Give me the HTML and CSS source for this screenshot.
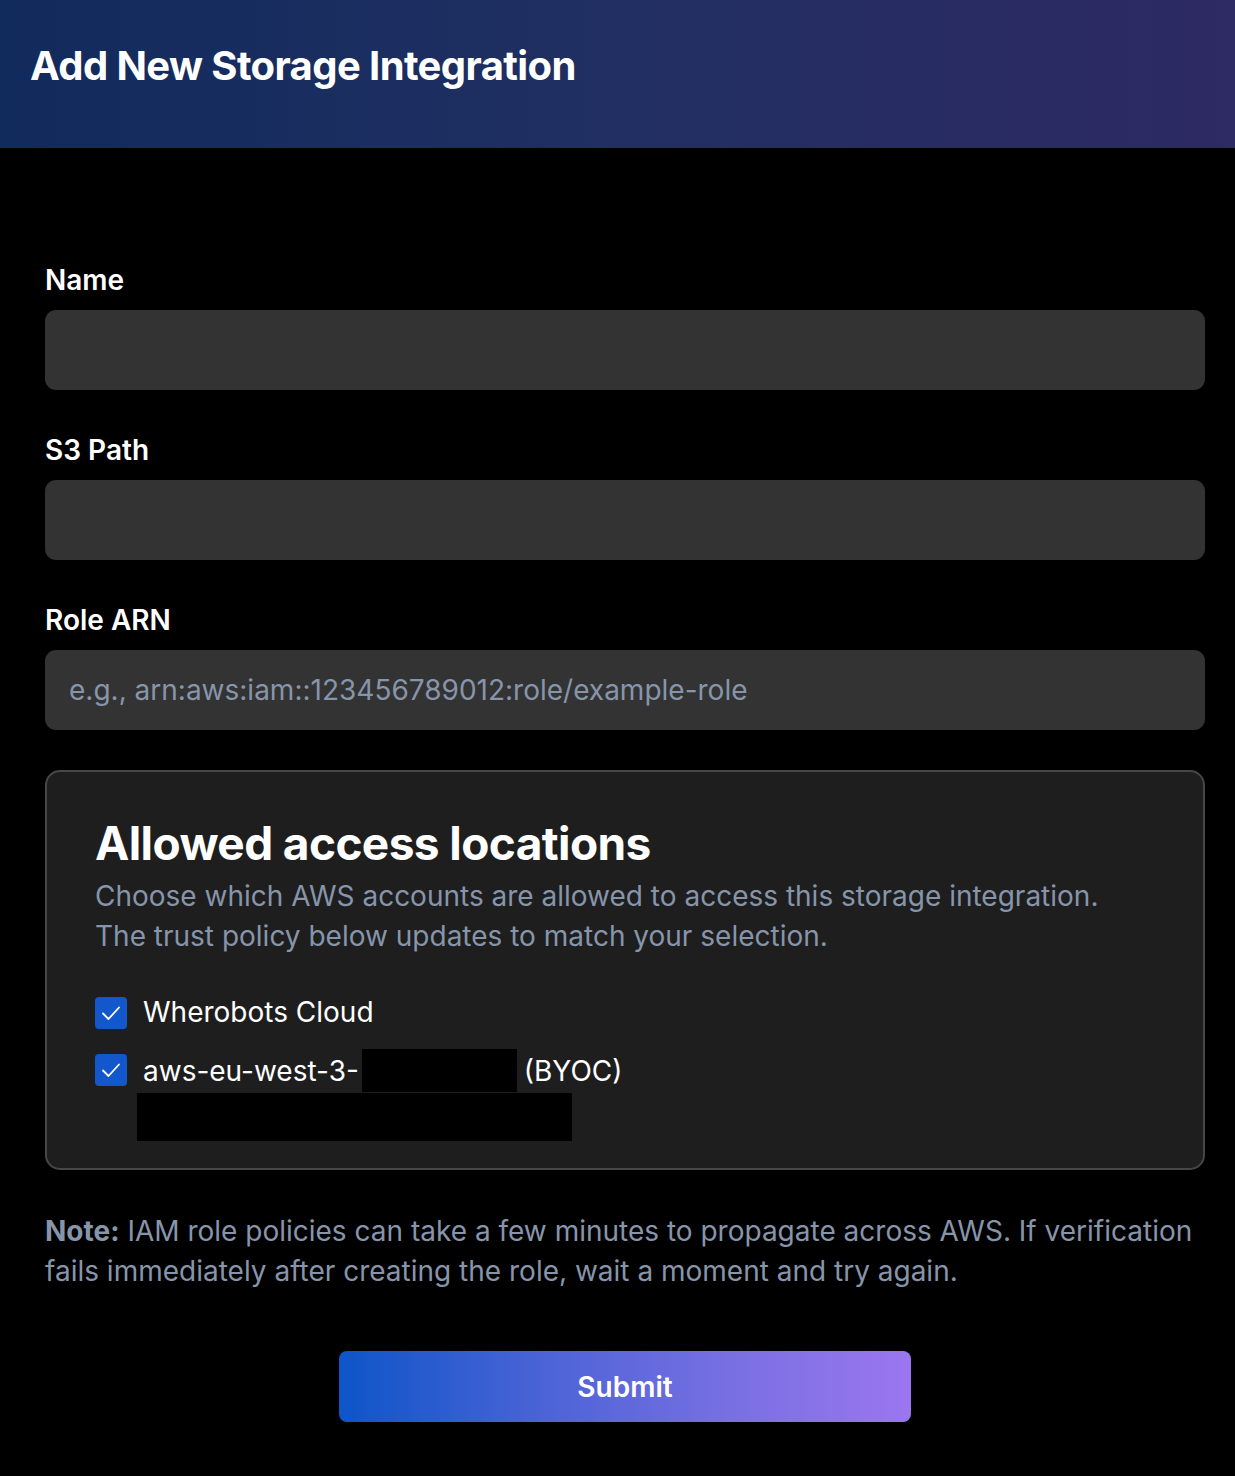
FILE: index.html
```html
<!DOCTYPE html>
<html lang="en">
<head>
<meta charset="utf-8">
<title>Add New Storage Integration</title>
<link rel="stylesheet" href="styles.css">
</head>
<body>
<header class="header">
  <h1 class="title">Add New Storage Integration</h1>
</header>
<main class="form">
  <div class="field">
    <label class="label">Name</label>
    <div class="input"></div>
  </div>
  <div class="field">
    <label class="label">S3 Path</label>
    <div class="input"></div>
  </div>
  <div class="field">
    <label class="label">Role ARN</label>
    <div class="input"><span class="placeholder">e.g., arn:aws:iam::123456789012:role/example-role</span></div>
  </div>
  <section class="box">
    <h2 class="box-title">Allowed access locations</h2>
    <p class="box-desc">Choose which AWS accounts are allowed to access this storage integration. The trust policy below updates to match your selection.</p>
    <div class="options">
      <div class="option">
        <span class="check"><svg viewBox="0 0 32 32" width="32" height="32"><path d="M8 16.5l5.5 5.5L24 10.5" fill="none" stroke="#fff" stroke-width="1.8" stroke-linecap="round" stroke-linejoin="round"/></svg></span>
        <span class="opt-label">Wherobots Cloud</span>
      </div>
      <div class="option">
        <span class="check"><svg viewBox="0 0 32 32" width="32" height="32"><path d="M8 16.5l5.5 5.5L24 10.5" fill="none" stroke="#fff" stroke-width="1.8" stroke-linecap="round" stroke-linejoin="round"/></svg></span>
        <span class="opt-label">
          <span class="opt-line">aws-eu-west-3-<span class="redact redact-a"></span>(BYOC)</span>
          <span class="redact redact-b"></span>
        </span>
      </div>
    </div>
  </section>
  <p class="note"><strong class="note-lead">Note:</strong> IAM role policies can take a few minutes to propagate across AWS. If verification fails immediately after creating the role, wait a moment and try again.</p>
  <div class="actions">
    <button class="submit" type="button">Submit</button>
  </div>
</main>
</body>
</html>
```
FILE: styles.css
```css
* { box-sizing: border-box; }
html, body {
  margin: 0;
  background: #000;
  color: #fff;
  font-family: Inter, "Noto Sans", "Liberation Sans", sans-serif;
}
.header {
  height: 148px;
  padding: 0 30px;
  display: flex;
  align-items: center;
  background: linear-gradient(90deg, #112b5c 0%, #212f62 50%, #2e2a63 100%);
}
.title {
  margin: 0;
  font-size: 40px;
  font-weight: 700;
  letter-spacing: -0.6px;
  line-height: 1;
  transform: translateY(-8px);
}
.form {
  padding: 112px 30px 60px 45px;
}
.field {
  display: flex;
  flex-direction: column;
  gap: 10px;
  margin-bottom: 40px;
}
.label {
  font-size: 28px;
  font-weight: 600;
  line-height: 40px;
}
.input {
  height: 80px;
  background: #333333;
  border-radius: 11px;
  display: flex;
  align-items: center;
  padding: 0 24px;
}
.placeholder {
  font-size: 28px;
  color: #8795ab;
}
.box {
  border: 2px solid #474747;
  background: #1e1e1e;
  border-radius: 15px;
  padding: 44px 48px 27px 48px;
}
.box-title {
  margin: 0;
  font-size: 46px;
  font-weight: 700;
  line-height: 54px;
  letter-spacing: -0.6px;
}
.box-desc {
  margin: 6px 0 0;
  font-size: 28px;
  line-height: 40px;
  color: #8795ab;
  max-width: 1010px;
}
.options {
  margin-top: 36px;
  display: flex;
  flex-direction: column;
  gap: 17px;
}
.option {
  display: flex;
  align-items: flex-start;
  gap: 16px;
}
.check {
  flex: none;
  width: 32px;
  height: 32px;
  margin-top: 5px;
  border-radius: 4px;
  background: #1258cc;
  display: flex;
}
.opt-label {
  font-size: 28px;
  line-height: 40px;
  display: flex;
  flex-direction: column;
}
.opt-line {
  display: flex;
  align-items: center;
}
.redact {
  display: inline-block;
  background: #000;
}
.redact-a {
  width: 155px;
  height: 43px;
  margin-left: 3px;
  margin-right: 7px;
}
.redact-b {
  width: 435px;
  height: 48px;
  margin-left: -6px;
  margin-top: 1px;
}
.note {
  margin: 41px 0 0;
  font-size: 28px;
  line-height: 40px;
  color: #8795ab;
}
.note-lead { font-weight: 700; }
.actions {
  margin-top: 60px;
  display: flex;
  justify-content: center;
}
.submit {
  width: 572px;
  height: 71px;
  border: 0;
  border-radius: 8px;
  background: linear-gradient(90deg, #0d55c8 0%, #4a63d6 35%, #7a70e3 70%, #9b76ef 100%);
  color: #fff;
  font-family: inherit;
  font-size: 28px;
  font-weight: 600;
}
```
